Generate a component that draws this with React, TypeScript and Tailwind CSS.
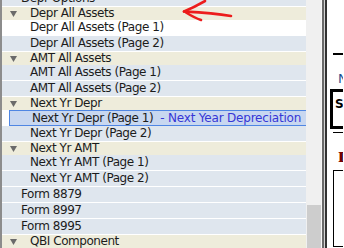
import React from "react";

type Row =
  | { kind: "item"; text: string; indent?: "deep" | "shallow"; white?: boolean }
  | { kind: "header"; text: string }
  | { kind: "selected"; text: string; extra: string };

const rows: Row[] = [
  { kind: "item", text: "Depr Options", indent: "shallow" },
  { kind: "header", text: "Depr All Assets" },
  { kind: "item", text: "Depr All Assets (Page 1)", white: true },
  { kind: "item", text: "Depr All Assets (Page 2)" },
  { kind: "header", text: "AMT All Assets" },
  { kind: "item", text: "AMT All Assets (Page 1)" },
  { kind: "item", text: "AMT All Assets (Page 2)" },
  { kind: "header", text: "Next Yr Depr" },
  { kind: "selected", text: "Next Yr Depr (Page 1)", extra: "- Next Year Depreciation" },
  { kind: "item", text: "Next Yr Depr (Page 2)" },
  { kind: "header", text: "Next Yr AMT" },
  { kind: "item", text: "Next Yr AMT (Page 1)" },
  { kind: "item", text: "Next Yr AMT (Page 2)" },
  { kind: "item", text: "Form 8879", indent: "shallow" },
  { kind: "item", text: "Form 8997", indent: "shallow" },
  { kind: "item", text: "Form 8995", indent: "shallow" },
  { kind: "header", text: "QBI Component" },
];

function Triangle() {
  return (
    <svg width="7" height="6" viewBox="0 0 7 6" className="shrink-0">
      <polygon points="0,0 7,0 3.5,6" fill="#6a6a6a" />
    </svg>
  );
}

function RowView({ row }: { row: Row }) {
  if (row.kind === "header") {
    return (
      <div className="h-[13px] bg-[#eeecdb] flex items-center pl-[8px] text-[#1c1c1c] leading-[13px] whitespace-nowrap">
        <Triangle />
        <span className="ml-[13px]">{row.text}</span>
      </div>
    );
  }
  if (row.kind === "selected") {
    return (
      <div className="h-[16px] ml-[7px] bg-[#c8d7f0] border-y border-l border-[#4f86e3] flex items-center pl-[22px] leading-[14px] whitespace-nowrap overflow-hidden">
        <span className="text-[#1c1c1c]">{row.text}</span>
        <span className="ml-[7px] text-[#3636d6] tracking-[-0.2px]">{row.extra}</span>
      </div>
    );
  }
  return (
    <div
      className={`h-[16px] border-b border-white flex items-center leading-[15px] whitespace-nowrap text-[#1c1c1c] ${
        row.white ? "bg-white" : "bg-[#dfe6ee]"
      } ${row.indent === "shallow" ? "pl-[19px]" : "pl-[28px]"}`}
    >
      {row.text}
    </div>
  );
}

export default function App() {
  return (
    <div
      className="w-[344px] h-[248px] flex overflow-hidden bg-white text-[12px] tracking-[-0.45px]"
      style={{ fontFamily: '"DejaVu Sans", Verdana, sans-serif' }}
    >
      <div className="w-[2px] shrink-0 bg-[#8c8c8c]" />
      <div className="w-[304px] shrink-0 relative overflow-hidden bg-white">
        <div className="mt-[-9px] flex flex-col">
          {rows.map((r, i) => (
            <RowView key={i} row={r} />
          ))}
        </div>
        <svg
          className="absolute left-[176px] top-0"
          width="60"
          height="24"
          viewBox="0 0 60 24"
          fill="none"
          stroke="#ec1c1c"
          strokeWidth="2.6"
          strokeLinecap="round"
          strokeLinejoin="round"
        >
          <path d="M6 11.5 C 18 12, 34 12.5, 53 16" />
          <path d="M27 1 C 20 5, 12 9, 6 11.5" />
          <path d="M8 12.5 C 12 15, 17 18, 23 20" />
        </svg>
      </div>
      <div className="w-[15px] shrink-0 bg-[#f0f0f0] flex flex-col justify-end">
        <div className="h-[43px] ml-[1px] bg-[#cdcdcd]" />
      </div>
      <div className="w-[1px] shrink-0 bg-[#f8f8f8]" />
      <div className="w-[2px] shrink-0 bg-[#6a6a6a]" />
      <div className="w-[1px] shrink-0 bg-[#d4d4d4]" />
      <div className="w-[2px] shrink-0 bg-[#333333]" />
      <div className="w-[16px] shrink-0 bg-white flex flex-col overflow-hidden tracking-normal">
        <div className="mt-[53px] ml-[6px] h-[2px] w-[12px] bg-black shrink-0" />
        <div className="mt-[17px] ml-[11px] text-[13px] leading-[13px] text-[#1d4f91]">N</div>
        <div className="mt-[4px] ml-[3px] h-[40px] w-[20px] border-[3px] border-r-0 border-black shrink-0 pl-[2px] pt-[3px]">
          <span className="font-bold text-[12px] leading-[12px] text-black">S</span>
        </div>
        <div className="mt-[3px] ml-[6px] h-[1px] w-[12px] bg-black shrink-0" />
        <div
          className="mt-[18px] ml-[11px] font-bold text-[14px] leading-[14px] text-[#7a0000]"
          style={{ fontFamily: '"Liberation Serif", serif', textShadow: "1px 0 0 #2a0000" }}
        >
          I
        </div>
        <div className="mt-[5px] ml-[6px] h-[77px] w-[20px] border border-r-0 border-black shrink-0" />
      </div>
    </div>
  );
}
